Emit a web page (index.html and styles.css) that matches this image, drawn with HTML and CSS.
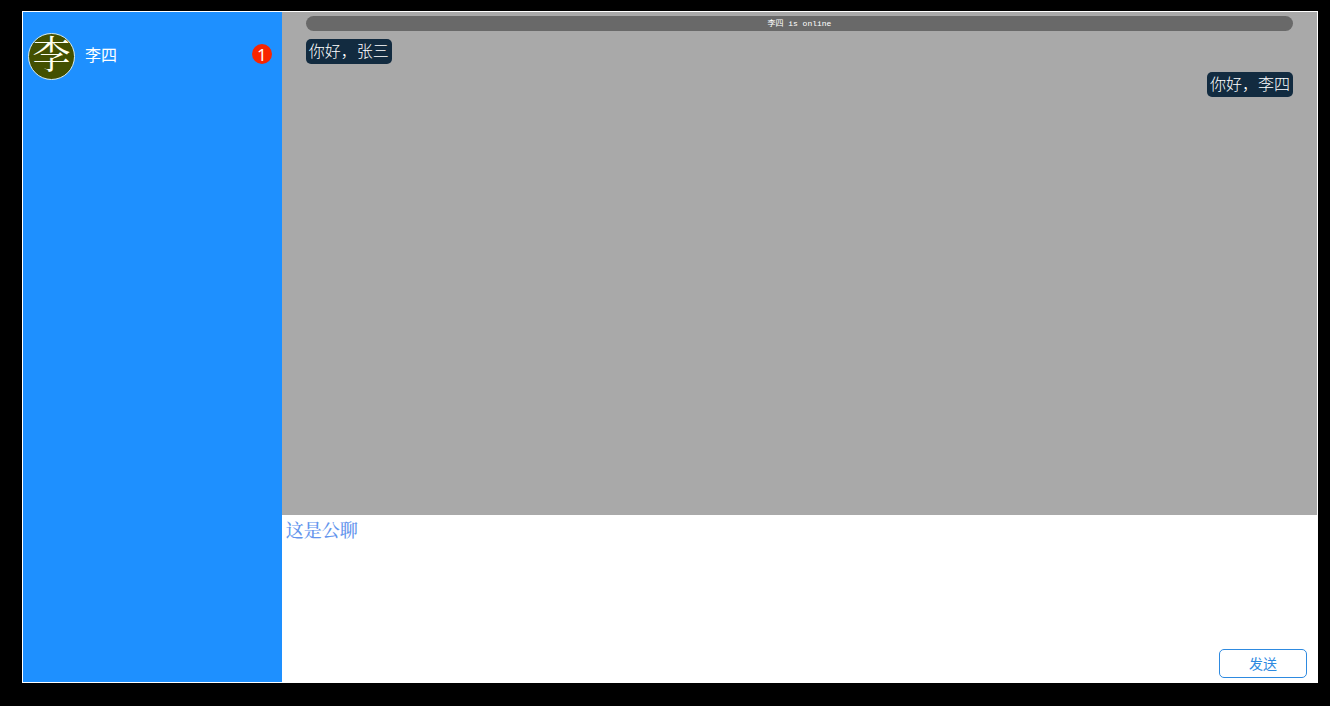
FILE: index.html
```html
<!DOCTYPE html>
<html lang="zh-CN">
<head>
<meta charset="utf-8">
<title>聊天室</title>
<link rel="stylesheet" href="styles.css">
</head>
<body>
<main class="chat">
  <aside class="contacts">
    <button class="contact" type="button">
      <span class="avatar" aria-hidden="true">李</span>
      <span class="contact-name">李四</span>
      <span class="unread">1</span>
    </button>
  </aside>
  <section class="conversation">
    <div class="messages">
      <p class="notice">李四 is online</p>
      <p class="bubble">你好，张三</p>
      <p class="bubble bubble-own">你好，李四</p>
    </div>
    <form class="composer">
      <textarea class="composer-input" aria-label="消息" placeholder="这是公聊"></textarea>
      <button class="send" type="button">发送</button>
    </form>
  </section>
</main>
</body>
</html>
```

FILE: styles.css
```css
* {
  box-sizing: border-box;
}

body {
  margin: 0;
  height: 100vh;
  padding: 11px 12px 23px 22px;
  background: #000;
  font-family: "Liberation Sans", "Noto Sans CJK SC", sans-serif;
}

.chat {
  display: flex;
  height: 100%;
  border: 1px solid #fff;
  background: #fff;
}

.contacts {
  flex: 0 0 20%;
  background: #1e90ff;
  padding-top: 20px;
}

.contact {
  display: flex;
  align-items: center;
  width: 100%;
  height: 48px;
  padding: 0 10px 0 5px;
  border: 0;
  background: none;
  color: #fff;
  font: 16px/24px "Noto Sans CJK SC", sans-serif;
  text-align: left;
}

.avatar {
  display: flex;
  align-items: center;
  justify-content: center;
  width: 47px;
  height: 47px;
  border: 1px solid #d8ecf0;
  border-radius: 50%;
  background: #435000;
  color: #fffff0;
  font: 400 38px/40px "Noto Serif CJK SC", "Noto Sans CJK SC", serif;
  padding-bottom: 8px;
}

.contact-name {
  flex: 1;
  margin-left: 10px;
  padding-bottom: 4px;
}

.unread {
  width: 20px;
  height: 20px;
  margin-bottom: 4px;
  border-radius: 50%;
  background: #f92500;
  font: 17px/22px "Noto Sans", sans-serif;
  text-align: center;
}

.conversation {
  flex: 1;
  display: flex;
  flex-direction: column;
  min-width: 0;
}

.messages {
  flex: 0 0 75%;
  display: flex;
  flex-direction: column;
  align-items: flex-start;
  gap: 8px;
  padding: 4px 24px;
  overflow: auto;
  background: #a9a9a9;
}

.notice {
  align-self: stretch;
  margin: 0;
  border-radius: 8px;
  background: #696969;
  color: #fff;
  font: 8px/15px "Liberation Mono", "Noto Sans CJK SC", monospace;
  text-align: center;
}

.bubble {
  margin: 0;
  padding: 0 3px 2px;
  border-radius: 5px;
  background: #122b40;
  color: #fff;
  font: 300 16px/23px "Noto Sans CJK SC", sans-serif;
}

.bubble-own {
  align-self: flex-end;
}

.composer {
  flex: 1;
  display: flex;
  flex-direction: column;
  align-items: flex-end;
  min-height: 0;
  padding: 0 10px 4px 0;
}

.composer-input {
  flex: 1;
  width: 100%;
  min-height: 0;
  padding: 1px 4px;
  border: 0;
  outline: 0;
  resize: none;
  background: transparent;
  color: #6495ed;
  font: 500 18px/26px "Noto Serif CJK SC", "Noto Sans CJK SC", serif;
}

.composer-input::placeholder {
  color: #6495ed;
  opacity: 1;
}

.send {
  width: 88px;
  height: 29px;
  padding: 0 0 2px;
  border: 1px solid #2e8ae0;
  border-radius: 5px;
  background: #fff;
  color: #2e8ae0;
  font: 14px/20px "Noto Sans CJK SC", sans-serif;
}
```
